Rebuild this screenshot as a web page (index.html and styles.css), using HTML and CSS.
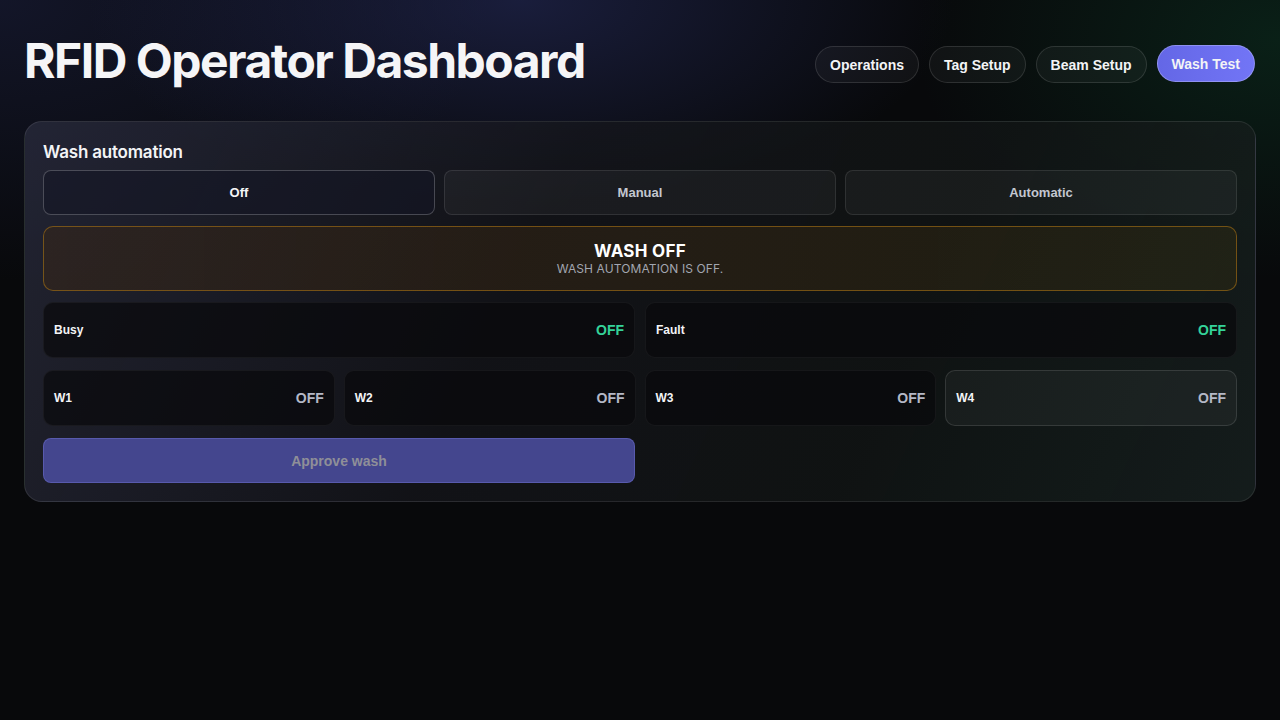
FILE: index.html
```html
<!DOCTYPE html>
<html lang="en">
<head>
  <meta charset="UTF-8">
  <title>RFID Operator Dashboard</title>
  <meta name="viewport" content="width=device-width, initial-scale=1">
  <link rel="stylesheet" href="styles.css">
</head>
<body>
  <header class="topbar">
    <h1>RFID Operator Dashboard</h1>
    <nav class="tabs">
      <button class="tab">Operations</button>
      <button class="tab">Tag Setup</button>
      <button class="tab">Beam Setup</button>
      <button class="tab active">Wash Test</button>
    </nav>
  </header>

  <section class="panel">
    <h2>Wash automation</h2>
    <div class="modes">
      <button class="mode selected">Off</button>
      <button class="mode">Manual</button>
      <button class="mode">Automatic</button>
    </div>
    <div class="banner">
      <div class="banner-title">WASH OFF</div>
      <div class="banner-sub">WASH AUTOMATION IS OFF.</div>
    </div>
    <div class="grid two">
      <div class="cell"><span class="label">Busy</span><span class="value ok">OFF</span></div>
      <div class="cell"><span class="label">Fault</span><span class="value ok">OFF</span></div>
    </div>
    <div class="grid four">
      <div class="cell"><span class="label">W1</span><span class="value">OFF</span></div>
      <div class="cell"><span class="label">W2</span><span class="value">OFF</span></div>
      <div class="cell"><span class="label">W3</span><span class="value">OFF</span></div>
      <div class="cell hover"><span class="label">W4</span><span class="value">OFF</span></div>
    </div>
    <div class="grid two">
      <button class="approve" disabled>Approve wash</button>
    </div>
  </section>
</body>
</html>
```

FILE: styles.css
```css
html { background: #08090b; }
body {
  margin: 0;
  min-height: 720px;
  padding: 0 24px;
  font-family: Inter, "Liberation Sans", sans-serif;
  color: #f3f4f6;
  background:
    radial-gradient(ellipse 620px 300px at 520px 0px, rgba(40, 46, 100, 0.55), transparent 70%),
    radial-gradient(ellipse 520px 340px at 1280px 40px, rgba(12, 60, 38, 0.45), transparent 70%),
    radial-gradient(ellipse 700px 400px at 0px 0px, rgba(30, 34, 70, 0.5), transparent 70%),
    #08090b;
}
button { font-family: "Liberation Sans", Arial, sans-serif; font-weight: 700; cursor: pointer; }

.topbar { display: flex; justify-content: space-between; align-items: center; padding-top: 33px; height: 88px; box-sizing: border-box; margin-bottom: 33px; }
h1 { margin: 0; font-size: 48px; font-weight: 700; letter-spacing: -1.5px; color: #f5f5f7; line-height: 60px; }
.tabs { display: flex; gap: 10px; padding-right: 1px; margin-top: 8px; }
.tab { height: 37px; padding: 0 14px; border-radius: 19px; border: 1px solid rgba(255,255,255,0.12); background: rgba(255,255,255,0.04); color: #f3f4f6; font-size: 14px; }
.tab.active { background: linear-gradient(90deg, #6467e6, #7275f6); border-color: rgba(255,255,255,0.25); margin-top: -1px; }

.panel {
  border: 1px solid rgba(255,255,255,0.09);
  border-radius: 18px;
  padding: 18px;
  display: flex; flex-direction: column; gap: 11px;
  background: linear-gradient(115deg, rgba(42,44,62,0.75) 0%, rgba(22,23,28,0.7) 40%, rgba(18,22,22,0.75) 70%, rgba(24,34,32,0.8) 100%);
}
h2 { margin: 0; font-size: 17px; font-weight: 600; letter-spacing: -0.2px; line-height: 20px; margin-top: 2px; margin-bottom: -3px; }

.modes { display: grid; grid-template-columns: repeat(3, 1fr); gap: 9px; }
.mode { height: 45px; border-radius: 8px; border: 1px solid rgba(255,255,255,0.1); background: rgba(255,255,255,0.04); color: #c3c7d0; font-size: 13px; }
.mode.selected { border-color: rgba(255,255,255,0.22); background: rgba(20,22,36,0.6); color: #f5f5f7; }

.banner { height: 65px; box-sizing: border-box; border: 1px solid rgba(170,115,20,0.6); border-radius: 10px; background: linear-gradient(90deg, rgba(60,40,20,0.45), rgba(55,40,20,0.5) 50%, rgba(50,45,20,0.45)); text-align: center; padding-top: 14px; }
.banner-title { font-size: 17px; font-weight: 700; color: #fff; line-height: 20px; letter-spacing: 0.3px; }
.banner-sub { font-size: 12px; color: #a2a6b0; line-height: 16px; letter-spacing: 0.1px; }

.grid { display: grid; gap: 9px; }
.grid.two { grid-template-columns: repeat(2, 1fr); gap: 10px; }
.grid.four { grid-template-columns: repeat(4, 1fr); gap: 9px; margin-top: 1px; }
.cell { height: 56px; box-sizing: border-box; display: flex; justify-content: space-between; align-items: center; padding: 0 10px; border: 1px solid rgba(255,255,255,0.05); border-radius: 10px; background: rgba(8,8,11,0.7); font-family: "Liberation Sans", Arial, sans-serif; font-weight: 700; }
.cell.hover { background: rgba(255,255,255,0.04); border-color: rgba(255,255,255,0.12); }
.label { font-size: 12px; color: #f3f4f6; }
.value { font-size: 14px; color: #b4b8c6; }
.value.ok { color: #34d399; }

.approve { height: 45px; border-radius: 8px; border: 1px solid rgba(120,120,220,0.4); background: #44468e; color: #8f8f98; font-size: 14px; margin-top: 1px; cursor: default; }
```
